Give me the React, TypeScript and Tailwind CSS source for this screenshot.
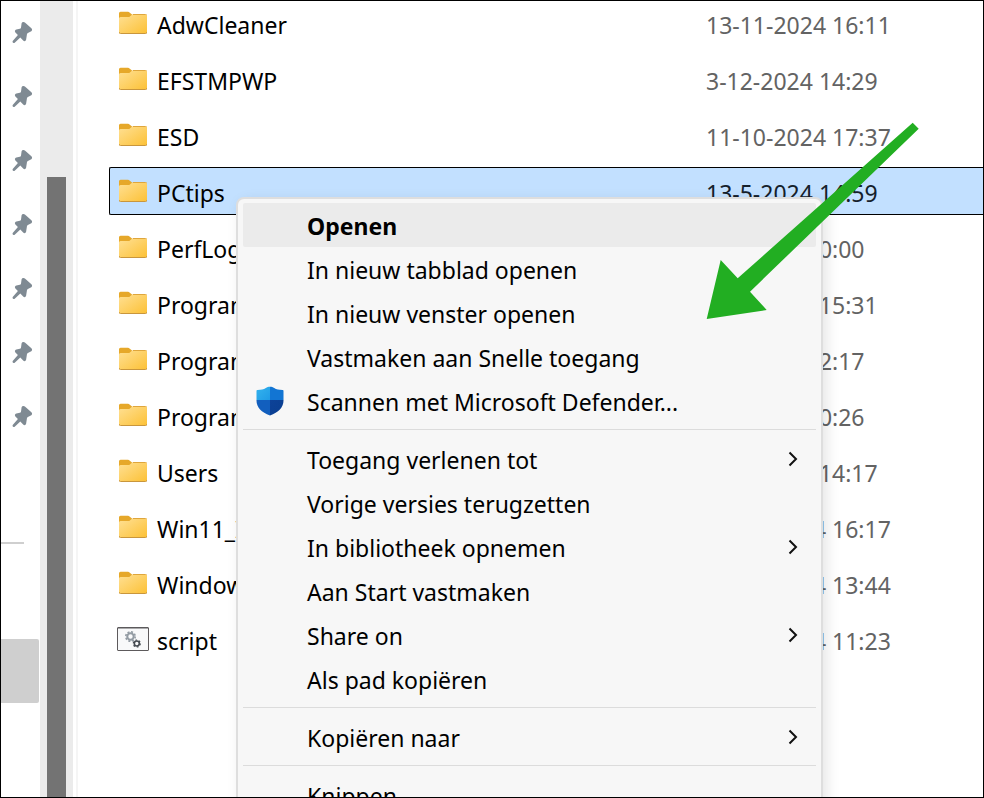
import type { ReactNode } from 'react';
import clsx from 'clsx';

interface FileEntry {
    name: string;
    modified: string;
    type: 'folder' | 'script';
}

interface MenuItem {
    label: string;
    icon?: ReactNode;
    submenu?: boolean;
    isDefault?: boolean;
}

const FILES: FileEntry[] = [
    { name: 'AdwCleaner', modified: '13-11-2024 16:11', type: 'folder' },
    { name: 'EFSTMPWP', modified: '3-12-2024 14:29', type: 'folder' },
    { name: 'ESD', modified: '11-10-2024 17:37', type: 'folder' },
    { name: 'PCtips', modified: '13-5-2024 14:59', type: 'folder' },
    { name: 'PerfLogs', modified: '7-5-2024 10:00', type: 'folder' },
    { name: 'Program Files', modified: '13-5-2024 15:31', type: 'folder' },
    { name: 'Program Files (x86)', modified: '7-5-2024 12:17', type: 'folder' },
    { name: 'ProgramData', modified: '7-5-2024 10:26', type: 'folder' },
    { name: 'Users', modified: '13-5-2024 14:17', type: 'folder' },
    { name: 'Win11_ISO', modified: '13-11-2024 16:17', type: 'folder' },
    { name: 'Windows', modified: '13-11-2024 13:44', type: 'folder' },
    { name: 'script', modified: '13-11-2024 11:23', type: 'script' },
];

const SELECTED = 'PCtips';

const PINNED = ['Bureaublad', 'Downloads', 'Documenten', 'Afbeeldingen', 'Muziek', "Video's", 'Projecten'];

const PinIcon = () => (
    <svg width="22" height="22" viewBox="0 0 22 22" fill="#7f8a93">
        <path d="M10.600 2.300c.6-1.400 2.200-1.700 3.300-.7l6.500 5.700c1.100 1 .8 2.700-.6 3.300l-2.900 1.300c-.5.200-.8.600-.9 1.100l-.9 5.700c-.3 1.500-1.900 1.900-2.900.8l-2.900-3-5.600 5.200c-1.300 1.100-2.900-.6-1.800-1.900l5-5.700-2.500-2.700c-1-1.100-.5-2.700 1-3l3.400-.7c.6-.1 1-.4 1.200-1z" />
    </svg>
);

const FolderIcon = () => (
    <svg width="28" height="24" viewBox="0 0 28 24">
        <defs>
            <linearGradient id="folder-front" x1="0" y1="0" x2="1" y2="1">
                <stop offset="0" stopColor="#ffe094" />
                <stop offset="1" stopColor="#fcc136" />
            </linearGradient>
        </defs>
        <path d="M0 2.300Q0 .8 1.500.8H9q.9 0 1.500.6L13 3.500V8H0z" fill="#e6a82a" />
        <path d="M0 7.500Q0 6 1.500 6h8q.8 0 1.400-.5l1.700-1.500q.5-.5 1.200-.5h12.700Q28 3.500 28 5v16q0 1.500-1.500 1.500h-25Q0 22.500 0 21z" fill="url(#folder-front)" />
        <path d="M13.800 3.500h12.700q1 0 1.300.6" fill="none" stroke="#dfa63c" />
        <path d="M0 21q0 1.500 1.500 1.500h25q1.500 0 1.500-1.500" fill="none" stroke="#c9963c" />
    </svg>
);

const ScriptIcon = () => (
    <svg width="32" height="24" viewBox="0 0 32 24" fill="none">
        <rect x=".5" y=".5" width="31" height="23" rx=".5" fill="#f8f9fa" stroke="#5d5a5c" />
        <path d="M1 1h30" stroke="#5d5a5c" />
        <circle cx="13.500" cy="9.500" r="3.200" stroke="#929ba3" strokeWidth="2" />
        <circle cx="13.500" cy="9.500" r="4.700" stroke="#929ba3" strokeWidth="1.600" strokeDasharray="2 1.690" />
        <circle cx="19.800" cy="16.500" r="2.500" stroke="#454b51" strokeWidth="1.600" />
        <circle cx="19.800" cy="16.500" r="3.500" stroke="#454b51" strokeWidth="1.200" strokeDasharray="1.700 1.960" />
    </svg>
);

const DefenderIcon = () => (
    <svg width="28" height="30" viewBox="0 0 28 30">
        <defs>
            <clipPath id="shield">
                <path d="M14 .8c1.700 0 2.900.4 4.200 1.200 2.300 1.400 4.600 1.900 8.300 2 .6 0 1 .4 1 1v9.500c0 7-5 11.700-13.500 15C5.500 26.200.5 21.500.5 14.500V5c0-.6.4-1 1-1 3.700-.1 6-.6 8.300-2C11.100 1.200 12.300.8 14 .8z" />
            </clipPath>
            <linearGradient id="shield-light" x1="0" y1="0" x2="1" y2="1">
                <stop offset="0" stopColor="#35b4ee" />
                <stop offset="1" stopColor="#1f9be6" />
            </linearGradient>
            <linearGradient id="shield-dark" x1="0" y1="0" x2="1" y2="1">
                <stop offset="0" stopColor="#0d4298" />
                <stop offset="1" stopColor="#0a3f90" />
            </linearGradient>
        </defs>
        <g clipPath="url(#shield)">
            <path d="M0 0h14v14H0z" fill="url(#shield-light)" />
            <path d="M14 0h14v14H14z" fill="#1275d3" />
            <path d="M0 14h14v16H0z" fill="#125fbe" />
            <path d="M14 14h14v16H14z" fill="url(#shield-dark)" />
        </g>
    </svg>
);

const SubmenuIcon = () => (
    <svg width="10" height="16" viewBox="0 0 10 16" fill="none" stroke="#111" strokeWidth="2">
        <path d="M1.500 1.500L8 8l-6.500 6.500" />
    </svg>
);

const MENU_GROUPS: MenuItem[][] = [
    [
        { label: 'Openen', isDefault: true },
        { label: 'In nieuw tabblad openen' },
        { label: 'In nieuw venster openen' },
        { label: 'Vastmaken aan Snelle toegang' },
        { label: 'Scannen met Microsoft Defender...', icon: <DefenderIcon /> },
    ],
    [
        { label: 'Toegang verlenen tot', submenu: true },
        { label: 'Vorige versies terugzetten' },
        { label: 'In bibliotheek opnemen', submenu: true },
        { label: 'Aan Start vastmaken' },
        { label: 'Share on', submenu: true },
        { label: 'Als pad kopiëren' },
    ],
    [{ label: 'Kopiëren naar', submenu: true }],
    [{ label: 'Knippen' }],
];

const Sidebar = () => (
    <nav className="w-[39px] shrink-0 overflow-hidden pr-px">
        <div className="-mt-0.5 flex flex-col">
            {PINNED.map((name) => (
                <button key={name} type="button" aria-label={name} className="flex h-16 items-center pl-2.5 pt-px">
                    <PinIcon />
                </button>
            ))}
        </div>
        <div className="mt-[95px] h-0.5 w-[23px] bg-[#cfcfcf]" />
        <button type="button" aria-label="Deze pc" className="mt-[95px] block h-16 w-full rounded-r-xs bg-[#cfcfcf]" />
    </nav>
);

const ScrollBar = () => (
    <div className="flex w-[33px] shrink-0 justify-center bg-[#ebebeb] pt-44">
        <div className="w-[19px] bg-[#737373]" />
    </div>
);

const FileList = () => (
    <main className="ml-[3px] min-w-0 flex-1 overflow-hidden border-l-2 border-[#f5f5f5] pl-[31px]">
        <table className="-mt-2.5 w-full table-fixed border-separate border-spacing-x-0 border-spacing-y-2 text-left">
            <tbody>
                {FILES.map((file) => {
                    const selected = file.name === SELECTED;
                    const cell = clsx('h-12 border-y p-0', selected ? 'border-black bg-[#c2e0ff]' : 'border-transparent');
                    return (
                        <tr key={file.name}>
                            <td className={clsx(cell, 'w-[597px] rounded-l-xs border-l pl-[7px]')}>
                                <div className="flex items-center gap-2">
                                    <span className="flex w-8 justify-center">
                                        {file.type === 'folder' ? <FolderIcon /> : <ScriptIcon />}
                                    </span>
                                    <span className="pt-1">{file.name}</span>
                                </div>
                            </td>
                            <td className={clsx(cell, 'whitespace-nowrap', selected ? 'text-[#15202b]' : 'text-[#636363]')}>
                                <div className="pt-1">{file.modified}</div>
                            </td>
                        </tr>
                    );
                })}
            </tbody>
        </table>
    </main>
);

const ContextMenu = () => (
    <div
        role="menu"
        className="absolute left-[235px] top-[196px] w-[587px] rounded-lg border-2 border-[#dedede] bg-[#f7f7f7] px-[5px] py-1 shadow-[4px_4px_14px_rgba(0,0,0,0.1)]"
    >
        {MENU_GROUPS.map((items, index) => (
            <div key={index}>
                {index > 0 && <div className="mb-[7px] mt-1.5 h-px bg-[#dcdcdc]" />}
                {items.map((item) => (
                    <button
                        key={item.label}
                        type="button"
                        role="menuitem"
                        className={clsx(
                            'flex h-11 w-full items-center pr-[18px] text-left',
                            item.isDefault && 'rounded-xs bg-[#ebebeb] font-bold',
                        )}
                    >
                        <span className="flex w-16 shrink-0 pl-[13px]">{item.icon}</span>
                        <span className="flex-1 pt-0.5">{item.label}</span>
                        {item.submenu && <SubmenuIcon />}
                    </button>
                ))}
            </div>
        ))}
    </div>
);

// Points at the open menu
const Arrow = () => (
    <svg
        className="pointer-events-none absolute left-[705px] top-[121px]"
        width="214"
        height="198"
        viewBox="0 0 214 198"
        fill="#22ae22"
    >
        <path d="M.7 197L14.700 138l17 18.300L206.700.7l6 6L44 169.700 60.700 188z" />
    </svg>
);

export default function App() {
    return (
        <div className="relative flex h-screen overflow-hidden border border-black bg-white font-['Noto_Sans','Open_Sans',sans-serif] text-[23px] leading-8 text-black">
            <Sidebar />
            <ScrollBar />
            <FileList />
            <ContextMenu />
            <Arrow />
        </div>
    );
}
